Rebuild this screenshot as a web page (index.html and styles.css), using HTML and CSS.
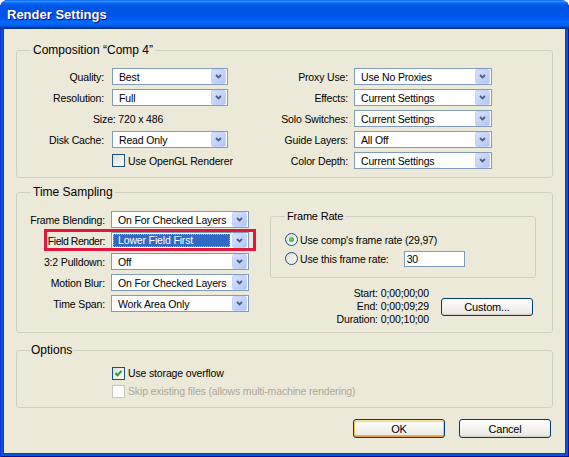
FILE: index.html
```html
<!DOCTYPE html>
<html lang="en">
<head>
    <meta charset="UTF-8">
    <title>Render Settings</title>
    <link rel="stylesheet" href="styles.css">
</head>
<body>
    <div class="window">
        <div class="title-bar">Render Settings</div>
        <div class="client">

            <fieldset class="group comp-group">
                <legend>Composition “Comp 4”</legend>
                <div class="comp-grid">
                    <span class="lbl">Quality:</span>
                    <div class="combo"><span class="value">Best</span><span class="arrow"><svg width="7" height="5" viewBox="0 0 7 5"><path d="M1 1 L3.5 3.5 L6 1"/></svg></span></div>
                    <span class="lbl lbl-r">Proxy Use:</span>
                    <div class="combo"><span class="value">Use No Proxies</span><span class="arrow"><svg width="7" height="5" viewBox="0 0 7 5"><path d="M1 1 L3.5 3.5 L6 1"/></svg></span></div>

                    <span class="lbl">Resolution:</span>
                    <div class="combo"><span class="value">Full</span><span class="arrow"><svg width="7" height="5" viewBox="0 0 7 5"><path d="M1 1 L3.5 3.5 L6 1"/></svg></span></div>
                    <span class="lbl lbl-r">Effects:</span>
                    <div class="combo"><span class="value">Current Settings</span><span class="arrow"><svg width="7" height="5" viewBox="0 0 7 5"><path d="M1 1 L3.5 3.5 L6 1"/></svg></span></div>

                    <span class="size-text">Size: 720 x 486</span>
                    <span class="lbl lbl-r">Solo Switches:</span>
                    <div class="combo"><span class="value">Current Settings</span><span class="arrow"><svg width="7" height="5" viewBox="0 0 7 5"><path d="M1 1 L3.5 3.5 L6 1"/></svg></span></div>

                    <span class="lbl">Disk Cache:</span>
                    <div class="combo"><span class="value">Read Only</span><span class="arrow"><svg width="7" height="5" viewBox="0 0 7 5"><path d="M1 1 L3.5 3.5 L6 1"/></svg></span></div>
                    <span class="lbl lbl-r">Guide Layers:</span>
                    <div class="combo"><span class="value">All Off</span><span class="arrow"><svg width="7" height="5" viewBox="0 0 7 5"><path d="M1 1 L3.5 3.5 L6 1"/></svg></span></div>

                    <span class="lbl"></span>
                    <div class="check-row"><span class="checkbox"></span>Use OpenGL Renderer</div>
                    <span class="lbl lbl-r">Color Depth:</span>
                    <div class="combo"><span class="value">Current Settings</span><span class="arrow"><svg width="7" height="5" viewBox="0 0 7 5"><path d="M1 1 L3.5 3.5 L6 1"/></svg></span></div>
                </div>
            </fieldset>

            <fieldset class="group time-group">
                <legend>Time Sampling</legend>
                <div class="time-body">
                    <div class="time-left">
                        <div class="field-row">
                            <span class="lbl">Frame Blending:</span>
                            <div class="combo"><span class="value">On For Checked Layers</span><span class="arrow"><svg width="7" height="5" viewBox="0 0 7 5"><path d="M1 1 L3.5 3.5 L6 1"/></svg></span></div>
                        </div>
                        <div class="field-row highlighted">
                            <span class="lbl">Field Render:</span>
                            <div class="combo"><span class="value selected">Lower Field First</span><span class="arrow"><svg width="7" height="5" viewBox="0 0 7 5"><path d="M1 1 L3.5 3.5 L6 1"/></svg></span></div>
                            <span class="red-box"></span>
                        </div>
                        <div class="field-row">
                            <span class="lbl">3:2 Pulldown:</span>
                            <div class="combo"><span class="value">Off</span><span class="arrow"><svg width="7" height="5" viewBox="0 0 7 5"><path d="M1 1 L3.5 3.5 L6 1"/></svg></span></div>
                        </div>
                        <div class="field-row">
                            <span class="lbl">Motion Blur:</span>
                            <div class="combo"><span class="value">On For Checked Layers</span><span class="arrow"><svg width="7" height="5" viewBox="0 0 7 5"><path d="M1 1 L3.5 3.5 L6 1"/></svg></span></div>
                        </div>
                        <div class="field-row">
                            <span class="lbl">Time Span:</span>
                            <div class="combo"><span class="value">Work Area Only</span><span class="arrow"><svg width="7" height="5" viewBox="0 0 7 5"><path d="M1 1 L3.5 3.5 L6 1"/></svg></span></div>
                        </div>
                    </div>

                    <div class="time-right">
                        <fieldset class="group rate-group">
                            <legend>Frame Rate</legend>
                            <div class="radio-row"><span class="radio checked"></span>Use comp's frame rate (29,97)</div>
                            <div class="radio-row second"><span class="radio"></span>Use this frame rate:<span class="text-input">30</span></div>
                        </fieldset>
                        <div class="span-row">
                            <div class="times">
                                <span class="t-lbl">Start:</span><span>0;00;00;00</span>
                                <span class="t-lbl">End:</span><span>0;00;09;29</span>
                                <span class="t-lbl">Duration:</span><span>0;00;10;00</span>
                            </div>
                            <button class="btn custom-btn">Custom...</button>
                        </div>
                    </div>
                </div>
            </fieldset>

            <fieldset class="group options-group">
                <legend>Options</legend>
                <div class="check-row option"><span class="checkbox checked"><svg width="9" height="9" viewBox="0 0 9 9"><path d="M1.5 4 L3.5 6.2 L7.5 1.8"/></svg></span>Use storage overflow</div>
                <div class="check-row option disabled"><span class="checkbox"></span>Skip existing files (allows multi-machine rendering)</div>
            </fieldset>

            <div class="buttons">
                <button class="btn default">OK</button>
                <button class="btn">Cancel</button>
            </div>
        </div>
    </div>
</body>
</html>
```

FILE: styles.css
```css
body {
    margin: 0;
    background: #ffffff;
    font-family: "Liberation Sans", Arial, sans-serif;
    font-size: 10.5px;
    letter-spacing: -0.15px;
    color: #000;
}
.window {
    width: 569px;
    height: 457px;
    background: #0855dd;
    border-radius: 8px 8px 0 0;
    box-shadow: inset 1px 0 #0831d9, inset -1px -1px #00138c;
    display: flex;
    flex-direction: column;
    overflow: hidden;
}
.title-bar {
    height: 29px;
    flex-shrink: 0;
    padding-left: 7px;
    line-height: 30px;
    font-size: 13px;
    font-weight: bold;
    letter-spacing: 0;
    color: #fff;
    text-shadow: 1px 1px #0f1089;
    border-radius: 8px 8px 0 0;
    background: linear-gradient(to bottom, #0058ee 0%, #3593ff 4%, #288eff 6%, #127dff 8%, #036ffc 10%, #0262ee 14%, #0057e5 20%, #0054e3 24%, #0055eb 56%, #005bf5 66%, #026afe 76%, #0062ef 86%, #0052d6 92%, #0040ab 94%, #003092 100%);
}
.client {
    flex: 1;
    margin: 0 3px 3px;
    border: 1px solid #0a3bc0;
    border-top: 0;
    background: #ece9d8;
    padding: 0 12px;
}

/* group boxes */
.group {
    margin: 0;
    padding: 0;
    border: 1px solid #d0d0bf;
    border-radius: 3px;
    min-inline-size: 0;
}
.group legend {
    margin-left: 14px;
    padding: 0 2px;
    font-size: 12px;
    line-height: 14px;
    letter-spacing: 0;
}
.comp-group {
    margin-top: 14px;
    padding: 11px 0 8px;
}
.time-group {
    margin-top: 7px;
    padding: 10px 0 6px;
}
.options-group {
    margin-top: 10px;
    padding: 7px 0 7px;
}
.options-group legend {
    margin-left: 13px;
    padding: 0 1px;
}

.lbl {
    text-align: right;
    white-space: nowrap;
}

/* composition */
.comp-grid {
    display: grid;
    grid-template-columns: 95px 116px 126px 138px;
    grid-auto-rows: 17px;
    row-gap: 4px;
    align-items: center;
}
.comp-grid .lbl {
    padding-right: 8px;
}
.comp-grid .lbl-r {
    padding-right: 6px;
}
.size-text {
    grid-column: 1 / 3;
    padding-left: 76px;
}

/* combo boxes */
.combo {
    height: 17px;
    box-sizing: border-box;
    border: 1px solid #7f9db9;
    background: #fff;
    display: flex;
    align-items: center;
}
.combo .value {
    flex: 1;
    padding-left: 6px;
    white-space: nowrap;
    overflow: hidden;
}
.combo .value.selected {
    margin: 1px 2px 1px 1px;
    padding-left: 5px;
    line-height: 13px;
    background: #316ac5;
    color: #fff;
    outline: 1px dotted #e8a800;
    outline-offset: -1px;
}
.arrow {
    width: 13px;
    height: 13px;
    margin-right: 1px;
    border: 1px solid #c3d3fd;
    border-radius: 2px;
    background: linear-gradient(135deg, #d6e1fd, #b2c5f6);
    display: flex;
    align-items: center;
    justify-content: center;
}
.arrow svg path {
    fill: none;
    stroke: #4d6185;
    stroke-width: 1.8;
}

/* checkboxes and radios */
.check-row {
    display: flex;
    align-items: center;
    gap: 3px;
    white-space: nowrap;
}
.checkbox {
    width: 13px;
    height: 13px;
    box-sizing: border-box;
    border: 1px solid #1c5180;
    background: linear-gradient(135deg, #dcdcd7, #ffffff);
    display: flex;
    align-items: center;
    justify-content: center;
    flex-shrink: 0;
}
.checkbox svg path {
    fill: none;
    stroke: #21a121;
    stroke-width: 2;
}
.check-row.option {
    height: 18px;
    margin-left: 95px;
}
.check-row.disabled {
    color: #aca899;
}
.check-row.disabled .checkbox {
    border-color: #cac8bb;
    background: #fff;
}
.radio {
    width: 13px;
    height: 13px;
    box-sizing: border-box;
    border-radius: 50%;
    border: 1px solid #1c5180;
    background: linear-gradient(135deg, #dcdcd7, #ffffff);
    display: flex;
    align-items: center;
    justify-content: center;
    margin-right: 2px;
}
.radio.checked::after {
    content: "";
    width: 5px;
    height: 5px;
    border-radius: 50%;
    background: radial-gradient(circle at 40% 40%, #6adb66, #21a121);
}

/* time sampling */
.time-body {
    display: flex;
    align-items: flex-start;
}
.time-left {
    margin-top: 2px;
    display: flex;
    flex-direction: column;
    gap: 4px;
}
.field-row {
    display: flex;
    align-items: center;
    height: 17px;
}
.field-row .lbl {
    width: 94px;
    box-sizing: border-box;
    padding-right: 6px;
}
.field-row .combo {
    width: 138px;
}
.highlighted {
    position: relative;
}
.highlighted .lbl {
    letter-spacing: -0.45px;
}
.red-box {
    position: absolute;
    left: 27px;
    top: -3px;
    width: 212px;
    height: 22px;
    box-sizing: border-box;
    border: 3px solid #e3173e;
}
.time-right {
    margin-left: 21px;
    width: 266px;
}
.rate-group {
    padding: 8px 0 10px 14px;
}
.rate-group legend {
    margin-left: 0;
    font-size: 11px;
    letter-spacing: -0.2px;
}
.radio-row {
    display: flex;
    align-items: center;
    height: 17px;
    white-space: nowrap;
}
.radio-row.second {
    margin-top: 2px;
}
.text-input {
    margin-left: 15px;
    width: 61px;
    height: 16px;
    box-sizing: border-box;
    border: 1px solid #7f9db9;
    background: #fff;
    padding-left: 2px;
    line-height: 14px;
}
.span-row {
    margin-top: 9px;
    display: flex;
    justify-content: flex-end;
    align-items: center;
    gap: 12px;
    padding-right: 3px;
}
.times {
    display: grid;
    grid-template-columns: auto auto;
    column-gap: 3px;
    line-height: 13px;
}
.t-lbl {
    text-align: right;
}

/* buttons */
.btn {
    width: 92px;
    height: 19px;
    padding: 0;
    font-family: inherit;
    font-size: 11px;
    letter-spacing: -0.2px;
    color: #000;
    border: 1px solid #003c74;
    border-radius: 3px;
    background: linear-gradient(to bottom, #ffffff 0%, #f6f5f0 40%, #ecebe6 85%, #d6d0c5 100%);
}
.custom-btn {
    height: 18px;
}
.btn.default {
    box-shadow: inset 0 1px #fce5a7, inset 0 -1px #e5a031, inset 1px 0 #f8c560, inset -1px 0 #f8c560, inset 0 2px #f9d37a, inset 0 -2px #eeb04f;
}
.buttons {
    margin-top: 11px;
    display: flex;
    justify-content: flex-end;
    gap: 14px;
    padding-right: 2px;
}
```
